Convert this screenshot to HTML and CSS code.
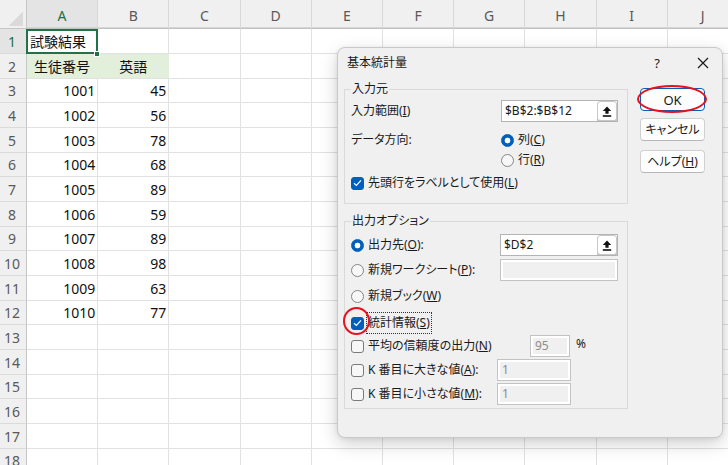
FILE: index.html
```html
<!DOCTYPE html>
<html lang="ja">
<head>
<meta charset="utf-8">
<title>基本統計量</title>
<link rel="stylesheet" href="styles.css">
</head>
<body>
<div class="sheet">
  <div class="corner"></div>
  <div class="colh colsel">A</div><div class="colh">B</div><div class="colh">C</div><div class="colh">D</div><div class="colh">E</div><div class="colh">F</div><div class="colh">G</div><div class="colh">H</div><div class="colh">I</div><div class="colh">J</div>

  <div class="rowh rowsel">1</div><div class="cell txt a1">試験結果<span class="handle"></span></div><div class="cell"></div><div class="cell"></div><div class="cell"></div><div class="cell"></div><div class="cell"></div><div class="cell"></div><div class="cell"></div><div class="cell"></div><div class="cell"></div>
  <div class="rowh">2</div><div class="cell hdr">生徒番号</div><div class="cell hdr">英語</div><div class="cell"></div><div class="cell"></div><div class="cell"></div><div class="cell"></div><div class="cell"></div><div class="cell"></div><div class="cell"></div><div class="cell"></div>
  <div class="rowh">3</div><div class="cell num">1001</div><div class="cell num">45</div><div class="cell"></div><div class="cell"></div><div class="cell"></div><div class="cell"></div><div class="cell"></div><div class="cell"></div><div class="cell"></div><div class="cell"></div>
  <div class="rowh">4</div><div class="cell num">1002</div><div class="cell num">56</div><div class="cell"></div><div class="cell"></div><div class="cell"></div><div class="cell"></div><div class="cell"></div><div class="cell"></div><div class="cell"></div><div class="cell"></div>
  <div class="rowh">5</div><div class="cell num">1003</div><div class="cell num">78</div><div class="cell"></div><div class="cell"></div><div class="cell"></div><div class="cell"></div><div class="cell"></div><div class="cell"></div><div class="cell"></div><div class="cell"></div>
  <div class="rowh">6</div><div class="cell num">1004</div><div class="cell num">68</div><div class="cell"></div><div class="cell"></div><div class="cell"></div><div class="cell"></div><div class="cell"></div><div class="cell"></div><div class="cell"></div><div class="cell"></div>
  <div class="rowh">7</div><div class="cell num">1005</div><div class="cell num">89</div><div class="cell"></div><div class="cell"></div><div class="cell"></div><div class="cell"></div><div class="cell"></div><div class="cell"></div><div class="cell"></div><div class="cell"></div>
  <div class="rowh">8</div><div class="cell num">1006</div><div class="cell num">59</div><div class="cell"></div><div class="cell"></div><div class="cell"></div><div class="cell"></div><div class="cell"></div><div class="cell"></div><div class="cell"></div><div class="cell"></div>
  <div class="rowh">9</div><div class="cell num">1007</div><div class="cell num">89</div><div class="cell"></div><div class="cell"></div><div class="cell"></div><div class="cell"></div><div class="cell"></div><div class="cell"></div><div class="cell"></div><div class="cell"></div>
  <div class="rowh">10</div><div class="cell num">1008</div><div class="cell num">98</div><div class="cell"></div><div class="cell"></div><div class="cell"></div><div class="cell"></div><div class="cell"></div><div class="cell"></div><div class="cell"></div><div class="cell"></div>
  <div class="rowh">11</div><div class="cell num">1009</div><div class="cell num">63</div><div class="cell"></div><div class="cell"></div><div class="cell"></div><div class="cell"></div><div class="cell"></div><div class="cell"></div><div class="cell"></div><div class="cell"></div>
  <div class="rowh">12</div><div class="cell num">1010</div><div class="cell num">77</div><div class="cell"></div><div class="cell"></div><div class="cell"></div><div class="cell"></div><div class="cell"></div><div class="cell"></div><div class="cell"></div><div class="cell"></div>
  <div class="rowh">13</div><div class="cell"></div><div class="cell"></div><div class="cell"></div><div class="cell"></div><div class="cell"></div><div class="cell"></div><div class="cell"></div><div class="cell"></div><div class="cell"></div><div class="cell"></div>
  <div class="rowh">14</div><div class="cell"></div><div class="cell"></div><div class="cell"></div><div class="cell"></div><div class="cell"></div><div class="cell"></div><div class="cell"></div><div class="cell"></div><div class="cell"></div><div class="cell"></div>
  <div class="rowh">15</div><div class="cell"></div><div class="cell"></div><div class="cell"></div><div class="cell"></div><div class="cell"></div><div class="cell"></div><div class="cell"></div><div class="cell"></div><div class="cell"></div><div class="cell"></div>
  <div class="rowh">16</div><div class="cell"></div><div class="cell"></div><div class="cell"></div><div class="cell"></div><div class="cell"></div><div class="cell"></div><div class="cell"></div><div class="cell"></div><div class="cell"></div><div class="cell"></div>
  <div class="rowh">17</div><div class="cell"></div><div class="cell"></div><div class="cell"></div><div class="cell"></div><div class="cell"></div><div class="cell"></div><div class="cell"></div><div class="cell"></div><div class="cell"></div><div class="cell"></div>
  <div class="rowh">18</div><div class="cell"></div><div class="cell"></div><div class="cell"></div><div class="cell"></div><div class="cell"></div><div class="cell"></div><div class="cell"></div><div class="cell"></div><div class="cell"></div><div class="cell"></div>
</div>

<div class="dialog">
  <div class="titlebar">
    <span class="title">基本統計量</span>
    <span class="help">?</span>
    <span class="close"><svg width="12" height="12" viewBox="0 0 12 12"><path d="M1 1 L11 11 M11 1 L1 11" stroke="#1a1a1a" stroke-width="1.2" fill="none"/></svg></span>
  </div>
  <div class="dbody">
    <div class="main">
      <fieldset class="group g1">
        <legend>入力元</legend>
        <div class="row r-in">
          <span class="lbl">入力範囲(<u>I</u>)</span>
          <div class="input wide"><span class="val">$B$2:$B$12</span><span class="refbtn"><svg width="10" height="11" viewBox="0 0 10 11"><path d="M5 0.5 L9.2 5 H6.6 V7.8 H3.4 V5 H0.8 Z" fill="#111"/><rect x="0.8" y="9.2" width="8.4" height="1.6" fill="#111"/></svg></span></div>
        </div>
        <div class="row r-dir">
          <span class="lbl">データ方向:</span>
          <span class="opt"><span class="radio on"></span><span class="t">列(<u>C</u>)</span></span>
        </div>
        <div class="row r-dir2">
          <span class="lbl"></span>
          <span class="opt"><span class="radio"></span><span class="t">行(<u>R</u>)</span></span>
        </div>
        <div class="row r-lab">
          <span class="opt"><span class="check on"><svg width="9" height="8" viewBox="0 0 9 8"><path d="M1 4.2 L3.4 6.4 L8 1.4" stroke="#fff" stroke-width="1.2" fill="none"/></svg></span><span class="t">先頭行をラベルとして使用(<u>L</u>)</span></span>
        </div>
      </fieldset>

      <fieldset class="group g2">
        <legend>出力オプション</legend>
        <div class="row r-out">
          <span class="opt"><span class="radio on"></span><span class="t">出力先(<u>O</u>):</span></span>
          <div class="input wide"><span class="val">$D$2</span><span class="refbtn"><svg width="10" height="11" viewBox="0 0 10 11"><path d="M5 0.5 L9.2 5 H6.6 V7.8 H3.4 V5 H0.8 Z" fill="#111"/><rect x="0.8" y="9.2" width="8.4" height="1.6" fill="#111"/></svg></span></div>
        </div>
        <div class="row r-ws">
          <span class="opt"><span class="radio"></span><span class="t">新規ワークシート(<u>P</u>):</span></span>
          <div class="input wide off"></div>
        </div>
        <div class="row r-book">
          <span class="opt"><span class="radio"></span><span class="t">新規ブック(<u>W</u>)</span></span>
        </div>
        <div class="row r-stat">
          <span class="opt"><span class="check on marked"><svg width="9" height="8" viewBox="0 0 9 8"><path d="M1 4.2 L3.4 6.4 L8 1.4" stroke="#fff" stroke-width="1.2" fill="none"/></svg><span class="ring"></span></span><span class="focus">統計情報(<u>S</u>)</span></span>
        </div>
        <div class="row r-conf">
          <span class="opt"><span class="check"></span><span class="t">平均の信頼度の出力(<u>N</u>)</span></span>
          <div class="input off small"><span class="val">95</span></div>
          <span class="pct">%</span>
        </div>
        <div class="row r-k">
          <span class="opt"><span class="check"></span><span class="t">K 番目に大きな値(<u>A</u>):</span></span>
          <div class="input off kbox"><span class="val">1</span></div>
        </div>
        <div class="row r-k">
          <span class="opt"><span class="check"></span><span class="t">K 番目に小さな値(<u>M</u>):</span></span>
          <div class="input off kbox"><span class="val">1</span></div>
        </div>
      </fieldset>
    </div>

    <div class="buttons">
      <div class="btn default"><span>OK</span><span class="ring"></span></div>
      <div class="btn b-cancel"><span>キャンセル</span></div>
      <div class="btn b-help"><span>ヘルプ(<u>H</u>)</span></div>
    </div>
  </div>
</div>
</body>
</html>
```

FILE: styles.css
```css
* { box-sizing: border-box; }

html, body {
  margin: 0;
  padding: 0;
  width: 728px;
  height: 465px;
  overflow: hidden;
  background: #ffffff;
  font-family: "Noto Sans", "Noto Sans CJK JP", sans-serif;
  text-autospace: no-autospace;
}

/* ---------- spreadsheet ---------- */
.sheet {
  display: grid;
  grid-template-columns: 27px repeat(10, 71.2px);
  grid-template-rows: 29px repeat(6, 25px 25px 24px);
  font-size: 14px;
  color: #111;
}

.corner {
  position: relative;
  background: #f0f0f0;
  border-right: 1px solid #c6c6c6;
  border-bottom: 1px solid #c6c6c6;
}
.corner::after {
  content: "";
  position: absolute;
  right: 3px;
  bottom: 2px;
  width: 15px;
  height: 15px;
  background: linear-gradient(to top left, #dadada 50%, transparent 50%);
}

.colh {
  background: #f0f0f0;
  border-right: 1px solid #d8d8d8;
  border-bottom: 1px solid #c2c2c2;
  box-shadow: inset 0 -1px 0 #d6d6d6;
  color: #595959;
  display: flex;
  align-items: center;
  justify-content: center;
  padding-top: 2px;
  font-size: 14px;
}
.colh.colsel {
  background: #e4e4e4;
  color: #1e7145;
}

.rowh {
  background: #f0f0f0;
  border-right: 1px solid #c6c6c6;
  border-bottom: 1px solid #dadada;
  color: #595959;
  display: flex;
  align-items: center;
  justify-content: center;
  font-size: 14px;
  padding-right: 2px;
}
.rowh.rowsel {
  background: #e4e4e4;
  color: #1e7145;
}

.cell {
  border-right: 1px solid #e1e1e1;
  border-bottom: 1px solid #e1e1e1;
  display: flex;
  align-items: center;
  padding: 0 3px;
  white-space: nowrap;
}
.cell.txt { justify-content: flex-start; padding-left: 3px; }
.cell.num { justify-content: flex-end; padding-right: 2px; }
.cell.hdr {
  justify-content: center;
  background: #e2efda;
  border-right-color: #e2efda;
}

.a1 { position: relative; }
.a1::after {
  content: "";
  position: absolute;
  left: -1px;
  top: 0;
  right: -1px;
  bottom: -1px;
  border: 2px solid #217346;
}
.handle {
  position: absolute;
  right: -3px;
  bottom: -4px;
  width: 6px;
  height: 6px;
  background: #217346;
  border: 1px solid #fff;
  z-index: 2;
}

/* ---------- dialog ---------- */
.dialog {
  position: absolute;
  left: 337px;
  top: 47px;
  width: 386px;
  height: 391px;
  background: #f0f0f0;
  border: 1px solid #c9c9c9;
  border-radius: 8px;
  box-shadow: 0 6px 18px rgba(0, 0, 0, 0.18), 0 1px 4px rgba(0, 0, 0, 0.08);
  font-size: 12px;
  color: #1a1a1a;
  line-height: 14px;
  font-feature-settings: "palt";
}

.titlebar {
  height: 29px;
  display: flex;
  align-items: center;
  padding: 0 0 0 9px;
}
.title { flex: 1; font-size: 12px; }
.help {
  width: 12px;
  text-align: center;
  font-size: 13px;
  margin-right: 34px;
}
.close {
  width: 12px;
  height: 12px;
  margin-right: 13px;
  display: flex;
}

.dbody {
  display: flex;
  padding: 5px 16px 0 6px;
  gap: 12px;
}

.main { width: 284px; display: flex; flex-direction: column; }

.group {
  margin: 0;
  border: 1px solid #d9d9d9;
  padding: 0 9px 0 6px;
  min-width: 0;
}
.group legend {
  padding: 0 1px;
  line-height: 14px;
  font-size: 12px;
}
.g1 { padding-bottom: 10px; }
.g2 { margin-top: 10px; padding-bottom: 3px; }

.row {
  display: flex;
  align-items: center;
  height: 20px;
  white-space: nowrap;
}
.r-in { height: 22px; margin-top: 4px; }
.r-dir { margin-top: 8px; }
.r-lab { margin-top: 3px; }
.r-out { height: 22px; margin-top: 6px; }
.r-ws { height: 22px; margin-top: 3px; }
.r-book { margin-top: 5px; }
.r-stat { height: 22px; margin-top: 6px; }
.r-conf { height: 22px; margin-top: 1px; }
.r-k { height: 22px; margin-top: 2px; }

.lbl { width: 150px; flex: none; }

.opt {
  display: flex;
  align-items: center;
  gap: 4px;
}

.radio {
  width: 13px;
  height: 13px;
  border-radius: 50%;
  border: 1px solid #858585;
  background: #f7f7f7;
  flex: none;
}
.radio.on {
  border-color: #005fb8;
  background: radial-gradient(circle, #ffffff 0 2.6px, #005fb8 3.2px);
}

.check {
  position: relative;
  width: 13px;
  height: 13px;
  border-radius: 3px;
  border: 1px solid #7a7a7a;
  background: #f7f7f7;
  flex: none;
  display: flex;
  align-items: center;
  justify-content: center;
}
.check.on {
  border-color: #005fb8;
  background: #005fb8;
}

.focus {
  display: inline-block;
  height: 22px;
  line-height: 20px;
  padding: 0 1px;
  border: 1px dotted #333;
  margin-left: -2px;
}

.input {
  margin-left: auto;
  height: 22px;
  border: 1px solid #b4b4b4;
  background: #ffffff;
  display: flex;
  align-items: center;
  font-size: 12px;
  color: #1a1a1a;
}
.input.wide { width: 118px; }
.input .val { flex: 1; padding-left: 3px; }
.input.off {
  background: #f0f0f0;
  border-color: #c3c3c3;
  box-shadow: inset 0 0 0 2px #ffffff;
  color: #8c8c8c;
}
.input.off .val { padding-left: 4px; }
.input.small { width: 40px; }
.pct { width: 48px; padding-left: 6px; margin-top: -4px; }
.input.kbox { width: 74px; margin-right: 47px; }

.refbtn {
  width: 20px;
  height: 20px;
  background: #ffffff;
  border: 1px solid #c8c8c8;
  border-radius: 3px;
  box-shadow: 0 1px 0 #b0b0b0;
  display: flex;
  align-items: center;
  justify-content: center;
}

.buttons {
  width: 65px;
  display: flex;
  flex-direction: column;
  padding-top: 6px;
}
.btn {
  position: relative;
  height: 23px;
  background: #fdfdfd;
  border: 1px solid #d0d0d0;
  border-bottom-color: #b8b8b8;
  border-radius: 4px;
  display: flex;
  align-items: center;
  justify-content: center;
  font-size: 12px;
  color: #1a1a1a;
}
.btn.default {
  border: 1px solid #005fb8;
  box-shadow: inset 0 0 0 1px #ffffff;
  font-size: 13px;
}
.b-cancel { margin-top: 7px; }
.b-help { margin-top: 9px; }

/* red annotation rings */
.ring {
  position: absolute;
  border: 2px solid #e8101c;
  border-radius: 50%;
  pointer-events: none;
}
.btn .ring {
  left: -4px;
  top: -4px;
  right: -3px;
  bottom: -3px;
}
.check .ring {
  left: -9px;
  top: -11px;
  right: -7px;
  bottom: -6px;
}
```
